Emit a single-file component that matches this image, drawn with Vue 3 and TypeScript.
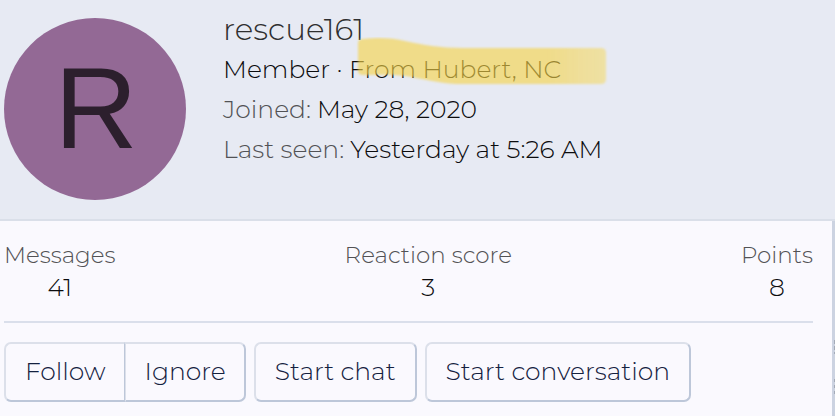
<script setup lang="ts">
interface Stat {
  label: string
  value: number
}

const member = {
  name: 'rescue161',
  initial: 'R',
  title: 'Member',
  location: 'From Hubert, NC',
  joined: 'May 28, 2020',
  lastSeen: 'Yesterday at 5:26 AM',
}

const stats: Stat[] = [
  { label: 'Messages', value: 41 },
  { label: 'Reaction score', value: 3 },
  { label: 'Points', value: 8 },
]
</script>

<template>
  <article class="card">
    <header class="card-header">
      <div class="avatar" aria-hidden="true">{{ member.initial }}</div>
      <div class="info">
        <h1 class="name">{{ member.name }}</h1>
        <div class="blurb">
          {{ member.title }} · {{ member.location }}
          <svg class="marker" viewBox="0 0 252 50" aria-hidden="true">
            <defs>
              <filter id="soft" x="-5%" y="-10%" width="110%" height="120%">
                <feGaussianBlur stdDeviation="1" />
              </filter>
              <linearGradient id="ink" x1="0" x2="1" y1="0" y2="0">
                <stop offset="0" stop-color="#f5d348" stop-opacity=".62" />
                <stop offset=".76" stop-color="#f5d348" stop-opacity=".62" />
                <stop offset="1" stop-color="#f5d85c" stop-opacity=".52" />
              </linearGradient>
            </defs>
            <path
              d="M2 6 Q2 2 7 2 C24 0 37 1 49 4 C68 8 84 11 107 11 L245 11 Q250 11 250 16 L250 42 Q250 47 245 47 L100 47 C81 46 68 42 50 39 C34 37 19 38 7 38 Q2 38 2 34 Z"
              fill="url(#ink)"
              filter="url(#soft)"
            />
          </svg>
        </div>
        <dl class="facts">
          <div class="fact"><dt>Joined:</dt><dd>{{ member.joined }}</dd></div>
          <div class="fact"><dt>Last seen:</dt><dd>{{ member.lastSeen }}</dd></div>
        </dl>
      </div>
    </header>
    <div class="card-body">
      <dl class="stats">
        <div v-for="stat in stats" :key="stat.label" class="stat">
          <dt>{{ stat.label }}</dt>
          <dd>{{ stat.value }}</dd>
        </div>
      </dl>
      <div class="actions">
        <div class="group">
          <button type="button" class="button">Follow</button>
          <button type="button" class="button">Ignore</button>
        </div>
        <button type="button" class="button">Start chat</button>
        <button type="button" class="button">Start conversation</button>
      </div>
    </div>
  </article>
</template>

<style>
body {
  margin: 0;
  background: #faf9fe;
}
html,
body,
#app {
  height: 100%;
}
</style>

<style scoped>
.card {
  display: flex;
  flex-direction: column;
  min-height: 100%;
  box-sizing: border-box;
  font-family: Montserrat, Inter, sans-serif;
  font-size: 25px;
  font-weight: 300;
  line-height: 40px;
  color: #0c0c0e;
  white-space: nowrap;
}
dl,
dd,
h1 {
  margin: 0;
}
.card-header {
  display: flex;
  gap: 37px;
  padding: 18px 4px 19px;
  background: #e7eaf3;
  border-bottom: 2px solid #dadfe9;
}
.avatar {
  flex: none;
  display: flex;
  align-items: center;
  justify-content: center;
  width: 182px;
  height: 182px;
  box-sizing: border-box;
  padding: 0 0 2px 2px;
  border-radius: 50%;
  background: #936995;
  color: #2c1f2d;
  font: 400 115px "Liberation Sans", sans-serif;
}
.info {
  margin-top: -8px;
}
.name {
  font-size: 31px;
  font-weight: 300;
  line-height: 39px;
  color: #2f2f30;
}
.blurb {
  position: relative;
}
.marker {
  position: absolute;
  left: 133px;
  top: -12px;
  width: 252px;
  height: 50px;
}
.fact {
  display: flex;
  gap: 6px;
}
dt {
  color: #525255;
}
.card-body {
  position: relative;
  flex: 1;
  padding: 14px 19px 14px 4px;
  border-right: 3px solid #ccd3e1;
}
/* Edge of the drag handle on the neighbouring panel */
.card-body::after {
  content: "";
  position: absolute;
  top: 119px;
  right: -3px;
  width: 1px;
  height: 54px;
  background:
    repeating-linear-gradient(#a4abb8 0 4px, transparent 4px 6px) top / 1px 14px no-repeat,
    repeating-linear-gradient(#a4abb8 0 3px, transparent 3px 6px) bottom / 1px 15px no-repeat;
}
.stats {
  display: flex;
  justify-content: space-between;
  padding-bottom: 22px;
  border-bottom: 2px solid #dadfeb;
  text-align: center;
}
.stats dt {
  font-size: 23px;
}
.stats dd {
  line-height: 24px;
}
.actions {
  display: flex;
  gap: 8px;
  padding-top: 19px;
}
.group {
  display: flex;
}
.button {
  padding: 7px 19px 9px;
  border: 2px solid;
  border-color: #dce0ea #bdc7d9 #bdc7d9 #dce0ea;
  border-radius: 7px;
  background: #faf9fe;
  color: #14213f;
  font: inherit;
}
.group .button:first-child {
  padding-right: 18px;
  border-right-width: 1px;
  border-radius: 7px 0 0 7px;
}
.group .button:last-child {
  padding-right: 18px;
  border-left-width: 1px;
  border-radius: 0 7px 7px 0;
}
</style>
